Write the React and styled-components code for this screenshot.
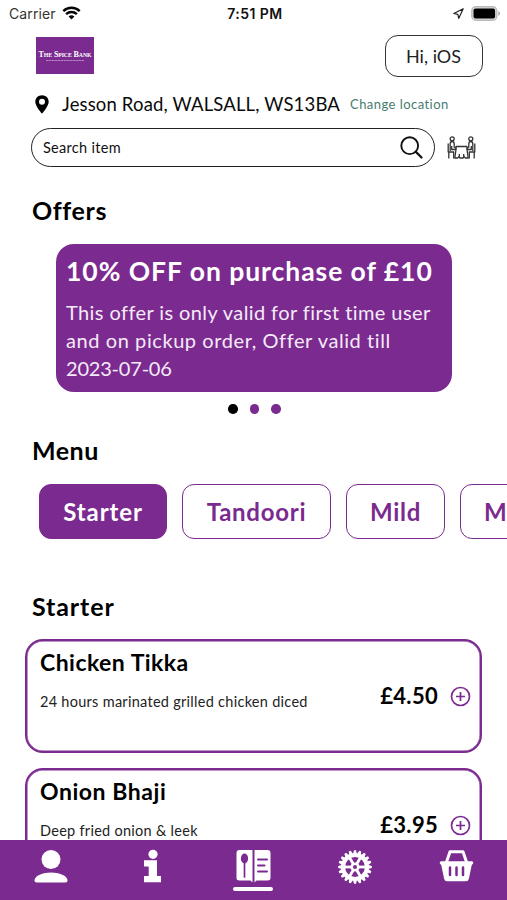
import { useState } from "react";
import styled, { createGlobalStyle } from "styled-components";

const PURPLE = "#7b2a90";

const GlobalStyle = createGlobalStyle`
  * {
    box-sizing: border-box;
  }
  body {
    margin: 0;
    background: #fff;
    color: #0b0b0b;
    font-family: Lato, "Open Sans", sans-serif;
  }
  button, input {
    font-family: inherit;
  }
  button {
    cursor: pointer;
  }
`;

const Screen = styled.div`
  display: flex;
  flex-direction: column;
  width: 507px;
  height: 900px;
  overflow: hidden;
  background: #fff;
`;

const StatusBar = styled.div`
  display: grid;
  grid-template-columns: 1fr auto 1fr;
  align-items: center;
  flex: none;
  height: 28px;
  padding: 0 6px 0 9px;
  font-family: Inter, sans-serif;
  font-size: 14px;
  color: #111;
`;

const Carrier = styled.div`
  display: flex;
  align-items: center;
  gap: 6px;
  padding-bottom: 2px;
  letter-spacing: 0.1px;
  color: #333;
`;

const Clock = styled.div`
  padding-bottom: 1px;
  font-size: 14px;
  font-weight: 600;
  letter-spacing: 0.45px;
`;

const StatusIcons = styled.div`
  display: flex;
  align-items: center;
  justify-content: flex-end;
  gap: 7px;
  padding-bottom: 2px;
`;

const Content = styled.main`
  flex: 1;
  min-height: 0;
  overflow: hidden;
`;

const Header = styled.header`
  display: flex;
  justify-content: space-between;
  align-items: flex-start;
  height: 60px;
  padding: 7px 24px 0 36px;
`;

const Logo = styled.div`
  display: flex;
  flex-direction: column;
  align-items: center;
  justify-content: center;
  width: 58px;
  height: 37px;
  margin-top: 2px;
  background: ${PURPLE};
  color: #fff;
  font-family: "Liberation Serif", serif;
`;

const LogoName = styled.div`
  font-size: 8px;
  line-height: 8px;
  font-weight: bold;
  white-space: nowrap;
  letter-spacing: -0.1px;

  small {
    font-size: 5.8px;
  }
`;

const LogoTagline = styled.div`
  width: 38px;
  height: 1px;
  margin-top: 1px;
  background: repeating-linear-gradient(90deg, #b583c2 0 2px, #9a5cab 2px 3px);
`;

const GreetingButton = styled.button`
  width: 98px;
  height: 42px;
  padding: 0 1px 1px 0;
  border: 1.5px solid #333;
  border-radius: 13px;
  background: #fff;
  color: #222;
  font-size: 18px;
`;

const AddressRow = styled.div`
  display: flex;
  align-items: center;
  height: 32px;
  padding-left: 35px;
  white-space: nowrap;
`;

const Address = styled.div`
  width: 288px;
  padding-left: 13px;
  font-size: 18.5px;
  letter-spacing: 0.15px;
`;

const ChangeLink = styled.a`
  margin-left: 13px;
  color: #477b70;
  font-size: 13px;
  letter-spacing: 0.45px;
`;

const SearchRow = styled.div`
  display: flex;
  align-items: center;
  gap: 12px;
  margin-top: 8px;
  padding-left: 31px;
`;

const SearchBox = styled.label`
  display: flex;
  align-items: center;
  justify-content: space-between;
  width: 404px;
  height: 39px;
  padding: 0 11px;
  border: 1.5px solid #222;
  border-radius: 20px;
`;

const SearchInput = styled.input`
  flex: 1;
  padding: 0;
  border: 0;
  outline: 0;
  font-size: 14.5px;
  letter-spacing: 0.3px;

  &::placeholder {
    color: #111;
    opacity: 1;
  }
`;

const SectionTitle = styled.h2`
  margin: ${({ $top }) => $top}px 0 0 32px;
  font-size: 25px;
  line-height: 32px;
  font-weight: 700;
  letter-spacing: ${({ $track }) => $track}px;
  color: #000;
`;

const OfferCard = styled.section`
  width: 396px;
  height: 148px;
  margin: 18px 0 0 56px;
  padding: 11px 10px;
  border-radius: 18px;
  background: ${PURPLE};
  color: #fff;
  white-space: nowrap;
`;

const OfferTitle = styled.h3`
  margin: 0 0 10px;
  font-size: 26.5px;
  line-height: 33px;
  font-weight: 700;
  letter-spacing: 0.95px;
`;

const OfferLine = styled.div`
  font-size: 20px;
  line-height: 28px;
  letter-spacing: ${({ $track }) => $track}px;
  color: #f5eaf7;
`;

const Dots = styled.div`
  display: flex;
  justify-content: center;
  gap: 12px;
  margin-top: 12px;
  padding-left: 2px;
`;

const Dot = styled.span`
  width: 9.5px;
  height: 9.5px;
  border-radius: 50%;
  background: ${({ $active }) => ($active ? "#000" : PURPLE)};
`;

const Tabs = styled.div`
  display: flex;
  gap: 15px;
  margin-top: 18.5px;
  padding-left: 39px;
`;

const Tab = styled.button`
  flex: none;
  width: ${({ $width }) => $width}px;
  height: 55px;
  padding: 0;
  border: 1.5px solid ${PURPLE};
  border-radius: 12px;
  background: ${({ $active }) => ($active ? PURPLE : "#fff")};
  color: ${({ $active }) => ($active ? "#fff" : PURPLE)};
  font-size: 24px;
  font-weight: 700;
  letter-spacing: ${({ $track }) => $track}px;
`;

const Dishes = styled.div`
  display: flex;
  flex-direction: column;
  gap: 15px;
  margin: 17px 25px 0;
`;

const DishCard = styled.article`
  display: flex;
  justify-content: space-between;
  align-items: center;
  height: 114px;
  padding: 0 9px 0 13px;
  border: 2px solid ${PURPLE};
  border-radius: 18px;
  box-shadow: inset 0 0 0 0.5px ${PURPLE};
`;

const DishInfo = styled.div`
  align-self: flex-start;
  padding-top: 6px;
  white-space: nowrap;
`;

const DishName = styled.h3`
  margin: 0;
  font-size: 23px;
  line-height: 30px;
  font-weight: 700;
  letter-spacing: ${({ $track }) => $track}px;
  color: #000;
`;

const DishText = styled.p`
  margin: 15px 0 0;
  font-size: 14.5px;
  line-height: 20px;
  letter-spacing: 0.28px;
  color: #222;
`;

const DishBuy = styled.div`
  display: flex;
  align-items: center;
  gap: 12px;
`;

const Price = styled.span`
  padding-bottom: 2px;
  font-size: 22px;
  font-weight: 700;
  letter-spacing: 0.3px;
  color: #000;
`;

const AddButton = styled.button`
  display: flex;
  padding: 0;
  border: 0;
  background: none;
`;

const BottomNav = styled.nav`
  display: grid;
  grid-template-columns: repeat(5, 1fr);
  flex: none;
  height: 60px;
  background: ${PURPLE};
`;

const NavItem = styled.button`
  display: flex;
  flex-direction: column;
  align-items: center;
  padding: 8px 0 0;
  border: 0;
  background: none;
`;

const Underline = styled.span`
  width: 40px;
  height: 3.5px;
  margin-top: 3px;
  border-radius: 2px;
  background: #fff;
`;

const WifiIcon = () => (
  <svg width="19" height="14" viewBox="0 0 19 14" fill="none" stroke="#050505">
    <path d="M1.3 5.1a12 12 0 0 1 16.4 0" strokeWidth="2.5" />
    <path d="M4.1 8.1a8 8 0 0 1 10.8 0" strokeWidth="2.4" />
    <path d="M6.6 10.5a4.4 4.4 0 0 1 5.8 0L9.5 13.6z" fill="#050505" stroke="none" />
  </svg>
);

const LocationIcon = () => (
  <svg width="11" height="11" viewBox="0 0 11 11" fill="none">
    <path d="M10.2.8.8 5.5l4 .8 1 4z" stroke="#222" strokeWidth="1.2" strokeLinejoin="round" />
  </svg>
);

const BatteryIcon = () => (
  <svg width="30" height="15" viewBox="0 0 30 15">
    <rect x="0.8" y="0.8" width="25" height="13.4" rx="4" fill="#ddd" stroke="#bbb" strokeWidth="1.4" />
    <rect x="2.5" y="2.6" width="21.6" height="9.8" rx="2" fill="#000" />
    <path d="M27.3 5q3.6 2.5 0 5z" fill="#aaa" />
  </svg>
);

const PinIcon = () => (
  <svg width="14" height="19" viewBox="0 0 14 19">
    <path
      fillRule="evenodd"
      d="M7 .3C3.2.3.3 3.1.3 6.8.3 11.4 7 18.7 7 18.7S13.7 11.4 13.7 6.8C13.7 3.1 10.8.3 7 .3zM7 3.7a3 3 0 1 1 0 6 3 3 0 0 1 0-6z"
    />
  </svg>
);

const SearchIcon = () => (
  <svg width="23" height="23" viewBox="0 0 23 23" fill="none" stroke="#111" strokeLinecap="round">
    <circle cx="9.7" cy="9.7" r="8.4" strokeWidth="1.9" />
    <path d="m15.9 15.9 5.6 5.6" strokeWidth="2.2" />
  </svg>
);

const TableIcon = () => (
  <svg width="29" height="24" viewBox="0 0 29 24" fill="none" stroke="#333" strokeWidth="1.3" strokeLinejoin="round">
    <circle cx="5.2" cy="2.8" r="2" />
    <circle cx="23.8" cy="2.8" r="2" />
    <path d="M1.2 7.5V16h5.5v6.5M1.8 16v6.500M3.2 15V8q0-2.500 2-2.500T7.2 8v3.2l2.3 1.3M4.7 10v3.500h4.500" />
    <path d="M27.800 7.500V16h-5.500v6.500M27.200 16v6.500M25.800 15V8q0-2.500-2-2.500t-2 2.500v3.200l-2.300 1.300M24.300 10v3.500h-4.500" />
    <path d="M9 10.500h11v3l1.200 8.500h-3l-1-1.500-1.200 1.500h-3l-1.200-1.500-1 1.500h-3L9 13.500zM12.300 18v3M16.700 18v3" />
  </svg>
);

const PlusIcon = () => (
  <svg width="21" height="21" viewBox="0 0 21 21" fill="none" stroke={PURPLE} strokeWidth="1.7">
    <circle cx="10.5" cy="10.5" r="9" />
    <path d="M10.5 6v9M6 10.5h9" />
  </svg>
);

const UserIcon = () => (
  <svg width="34" height="36" viewBox="0 0 34 36" fill="#fff">
    <circle cx="17" cy="11.5" r="9.5" />
    <path d="M.5 32.5c0-5 8.500-8 16.500-8s16.500 3 16.500 8q0 2-2 2h-29q-2 0-2-2z" />
  </svg>
);

const InfoIcon = () => (
  <svg width="20" height="36" viewBox="0 0 20 36" fill="#fff">
    <circle cx="11" cy="6.3" r="4.6" />
    <path d="M2 12.300h13v15.700h4v6.300H2v-6.300h4.700v-9.400H2z" />
  </svg>
);

const MenuIcon = () => (
  <svg width="35" height="36" viewBox="0 0 35 36">
    <path d="M3.5 2h13v32.500l-2-2h-11Q.5 32.500.5 30V5Q.5 2 3.500 2zM18.500 2h13q3 0 3 3v25q0 2.500-3 2.500h-11l-2 2z" fill="#fff" />
    <ellipse cx="8.5" cy="10.5" rx="3.6" ry="5" fill={PURPLE} />
    <path d="M8.500 14v15" stroke={PURPLE} strokeWidth="1.7" strokeLinecap="round" />
    <path d="M22 11.500h9M22 17.500h6.500M22 23.500h9" stroke={PURPLE} strokeWidth="2" strokeLinecap="round" />
  </svg>
);

const GearIcon = () => (
  <svg width="36" height="38" viewBox="-18 -19 36 38" fill="none" stroke="#fff">
    <circle r="12" strokeWidth="4.2" />
    {Array.from({ length: 20 }, (_, i) => (
      <path key={i} d="M-1.900-13.500-1-16.800H1L1.900-13.500z" fill="#fff" stroke="none" transform={`rotate(${i * 18})`} />
    ))}
    {[0, 60, 120, 180, 240, 300].map((angle) => (
      <path key={angle} d="M3.500 0H11" strokeWidth="2.8" transform={`rotate(${angle})`} />
    ))}
    <circle r="3.3" strokeWidth="2.6" />
  </svg>
);

const BasketIcon = () => (
  <svg width="35" height="36" viewBox="0 0 35 36">
    <path d="M7.500 14 11 3.800h13L27.500 14" fill="none" stroke="#fff" strokeWidth="3" strokeLinejoin="round" />
    <path d="M2 13.300h31q1.700.5 1.200 2l-1.500 2-2.800 13.500q-.5 2.500-3 2.500H8.100q-2.500 0-3-2.500L2.300 17.300.8 15.300q-.5-1.500 1.200-2z" fill="#fff" />
    <path d="M11 19.500v7.500M17.500 19.500v7.500M24 19.500v7.500" stroke={PURPLE} strokeWidth="2.5" strokeLinecap="round" />
  </svg>
);

const offerLines = [
  { text: "This offer is only valid for first time user", track: 0.41 },
  { text: "and on pickup order, Offer valid till", track: 0.58 },
  { text: "2023-07-06", track: -0.2 },
];

const categories = [
  { name: "Starter", width: 128, track: 0.9 },
  { name: "Tandoori", width: 149, track: 0.75 },
  { name: "Mild", width: 99, track: 0.75 },
  { name: "Medium", width: 142, track: 0.9 },
];

const dishes = [
  {
    name: "Chicken Tikka",
    text: "24 hours marinated grilled chicken diced",
    price: "£4.50",
    track: 0.46,
  },
  {
    name: "Onion Bhaji",
    text: "Deep fried onion & leek",
    price: "£3.95",
    track: 0.55,
  },
];

const navItems = [
  { id: "account", Icon: UserIcon },
  { id: "info", Icon: InfoIcon },
  { id: "menu", Icon: MenuIcon },
  { id: "settings", Icon: GearIcon },
  { id: "basket", Icon: BasketIcon },
];

const App = () => {
  const [category, setCategory] = useState("Starter");
  const [page, setPage] = useState("menu");
  const [search, setSearch] = useState("");

  return (
    <Screen>
      <GlobalStyle />
      <StatusBar>
        <Carrier>
          Carrier <WifiIcon />
        </Carrier>
        <Clock>7:51 PM</Clock>
        <StatusIcons>
          <LocationIcon />
          <BatteryIcon />
        </StatusIcons>
      </StatusBar>

      <Content>
        <Header>
          <Logo>
            <LogoName>
              T<small>HE</small> S<small>PICE</small> B<small>ANK</small>
            </LogoName>
            <LogoTagline />
          </Logo>
          <GreetingButton>Hi, iOS</GreetingButton>
        </Header>

        <AddressRow>
          <PinIcon />
          <Address>Jesson Road, WALSALL, WS13BA</Address>
          <ChangeLink>Change location</ChangeLink>
        </AddressRow>

        <SearchRow>
          <SearchBox>
            <SearchInput
              placeholder="Search item"
              value={search}
              onChange={(e) => setSearch(e.target.value)}
            />
            <SearchIcon />
          </SearchBox>
          <TableIcon />
        </SearchRow>

        <SectionTitle $top={27} $track={0.65}>Offers</SectionTitle>
        <OfferCard>
          <OfferTitle>10% OFF on purchase of £10</OfferTitle>
          {offerLines.map((line) => (
            <OfferLine key={line.text} $track={line.track}>
              {line.text}
            </OfferLine>
          ))}
        </OfferCard>
        <Dots>
          <Dot $active />
          <Dot />
          <Dot />
        </Dots>

        <SectionTitle $top={20} $track={0.5}>Menu</SectionTitle>
        <Tabs>
          {categories.map(({ name, width, track }) => (
            <Tab
              key={name}
              $width={width}
              $track={track}
              $active={name === category}
              onClick={() => setCategory(name)}
            >
              {name}
            </Tab>
          ))}
        </Tabs>

        <SectionTitle $top={51} $track={0.9}>{category}</SectionTitle>
        <Dishes>
          {dishes.map((dish) => (
            <DishCard key={dish.name}>
              <DishInfo>
                <DishName $track={dish.track}>{dish.name}</DishName>
                <DishText>{dish.text}</DishText>
              </DishInfo>
              <DishBuy>
                <Price>{dish.price}</Price>
                <AddButton>
                  <PlusIcon />
                </AddButton>
              </DishBuy>
            </DishCard>
          ))}
        </Dishes>
      </Content>

      <BottomNav>
        {navItems.map(({ id, Icon }) => (
          <NavItem key={id} onClick={() => setPage(id)}>
            <Icon />
            {page === id && <Underline />}
          </NavItem>
        ))}
      </BottomNav>
    </Screen>
  );
};

export default App;
